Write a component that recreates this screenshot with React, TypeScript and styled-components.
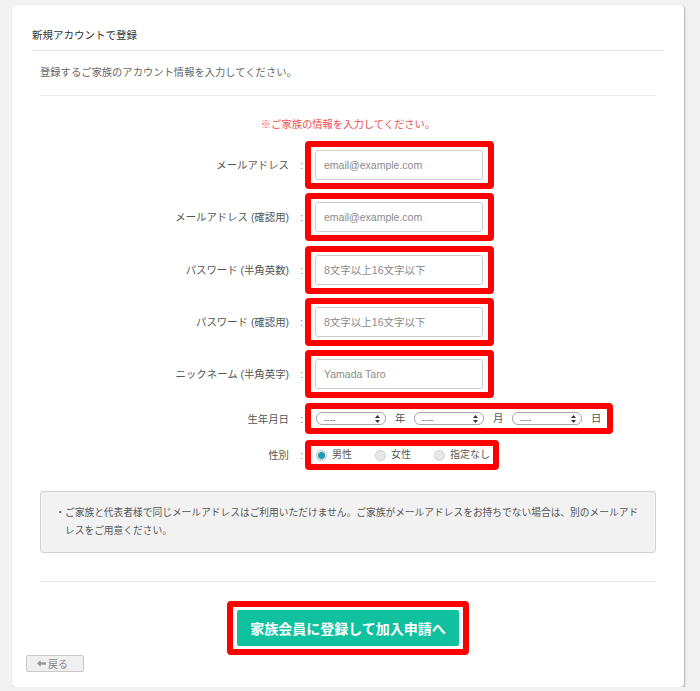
import React from "react";
import styled, { createGlobalStyle } from "styled-components";

const fields = [
  { label: "メールアドレス", placeholder: "email@example.com" },
  { label: "メールアドレス (確認用)", placeholder: "email@example.com" },
  { label: "パスワード (半角英数)", placeholder: "8文字以上16文字以下" },
  { label: "パスワード (確認用)", placeholder: "8文字以上16文字以下" },
  { label: "ニックネーム (半角英字)", placeholder: "Yamada Taro" },
];

const genders = [
  { label: "男性", checked: true },
  { label: "女性", checked: false },
  { label: "指定なし", checked: false },
];

const birthParts = ["年", "月", "日"];

const SelectArrows = () => (
  <svg width="5" height="8" viewBox="0 0 5 8">
    <path d="M2.5 0 L5 3 H0 Z" fill="#333" />
    <path d="M2.5 8 L5 5 H0 Z" fill="#333" />
  </svg>
);

const BackArrow = () => (
  <svg width="9" height="7" viewBox="0 0 9 7">
    <path d="M0 3.5 L3.6 0 V2.3 H9 V4.7 H3.6 V7 Z" fill="#999" />
  </svg>
);

const App = () => {
  return (
    <>
      <GlobalStyle />
      <Card>
        <Header>新規アカウントで登録</Header>
        <Body>
          <Subtitle>登録するご家族のアカウント情報を入力してください。</Subtitle>
          <Notice>※ご家族の情報を入力してください。</Notice>
          <Form>
            {fields.map((field, i) => (
              <Row key={field.label} $gap={i === 0 ? 0 : 4.25} $h={48}>
                <Label>{field.label}</Label>
                <Colon>:</Colon>
                <Highlight $pad="3px 5px 3px 4px">
                  <TextInput placeholder={field.placeholder} />
                </Highlight>
              </Row>
            ))}
            <Row $gap={5} $h={31}>
              <Label>生年月日</Label>
              <Colon>:</Colon>
              <Highlight $pad="3px 6px 3px 5px">
                <DateGroup>
                  {birthParts.map((unit) => (
                    <React.Fragment key={unit}>
                      <SelectBox>
                        <span>----</span>
                        <SelectArrows />
                      </SelectBox>
                      <Unit>{unit}</Unit>
                    </React.Fragment>
                  ))}
                </DateGroup>
              </Highlight>
            </Row>
            <Row $gap={6} $h={30}>
              <Label>性別</Label>
              <Colon>:</Colon>
              <Highlight $pad="3px 3px 3px 5px">
                <RadioGroup>
                  {genders.map((g) => (
                    <RadioItem key={g.label}>
                      <Radio $checked={g.checked} />
                      {g.label}
                    </RadioItem>
                  ))}
                </RadioGroup>
              </Highlight>
            </Row>
          </Form>
          <NoteBox>
            ・ご家族と代表者様で同じメールアドレスはご利用いただけません。ご家族がメールアドレスをお持ちでない場合は、別のメールアドレスをご用意ください。
          </NoteBox>
        </Body>
        <Divider />
        <Footer>
          <Highlight $pad="3px 4px">
            <SubmitButton>家族会員に登録して加入申請へ</SubmitButton>
          </Highlight>
          <BackButton>
            <BackArrow />
            戻る
          </BackButton>
        </Footer>
      </Card>
    </>
  );
};

export default App;

const GlobalStyle = createGlobalStyle`
  html, body {
    margin: 0;
    padding: 0;
    background: #f2f2f2;
  }
  body {
    font-family: "Liberation Sans", "Noto Sans CJK JP", sans-serif;
    color: #555;
  }
`;

const Card = styled.div`
  box-sizing: border-box;
  width: 672px;
  margin: 5px 0 0 12px;
  padding: 0 20px;
  background: #fff;
  border-radius: 4px;
  box-shadow: 1px 1px 2px rgba(0, 0, 0, 0.28), 0 0 1px rgba(0, 0, 0, 0.15);
`;

const Header = styled.div`
  padding: 22px 0 7px;
  font-size: 10.5px;
  line-height: 16px;
  color: #333;
  border-bottom: 1px solid #e3e3e3;
`;

const Body = styled.div`
  padding: 0 8px;
`;

const Subtitle = styled.div`
  padding: 14px 0;
  font-size: 10.3px;
  line-height: 16px;
  color: #666;
  border-bottom: 1px solid #ececec;
`;

const Notice = styled.div`
  margin: 21px 0 8px;
  text-align: center;
  font-size: 10.3px;
  line-height: 16px;
  color: #ef5050;
`;

const Form = styled.div`
  display: flex;
  flex-direction: column;
`;

const Row = styled.div<{ $gap: number; $h: number }>`
  display: grid;
  grid-template-columns: 249px 16px auto;
  align-items: center;
  height: ${({ $h }) => $h}px;
  margin-top: ${({ $gap }) => $gap}px;
  line-height: 14px;
`;

const Label = styled.div`
  padding-top: 2px;
  text-align: right;
  font-size: 10.4px;
  color: #555;
`;

const Colon = styled.span`
  padding-top: 2px;
  text-align: right;
  padding-right: 2px;
  font-size: 10px;
  color: #777;
`;

const Highlight = styled.div<{ $pad: string }>`
  justify-self: start;
  display: inline-flex;
  align-items: center;
  padding: ${({ $pad }) => $pad};
  border: 6px solid #ff0000;
  border-radius: 4px;
  line-height: 12px;
`;

const TextInput = styled.input`
  box-sizing: border-box;
  display: block;
  width: 168px;
  height: 30px;
  margin: 0;
  padding: 0 8px;
  border: 1px solid #cdcdcd;
  border-radius: 3px;
  font-family: inherit;
  font-size: 10.5px;
  color: #333;
  outline: none;
  &::placeholder {
    color: #8a8a8a;
  }
`;

const DateGroup = styled.div`
  display: flex;
  align-items: center;
  gap: 9px;
  height: 13px;
`;

const SelectBox = styled.div`
  box-sizing: border-box;
  width: 70px;
  height: 13px;
  display: flex;
  align-items: center;
  justify-content: space-between;
  padding: 0 5px 0 7px;
  border: 1px solid #a8a8a8;
  border-radius: 6px;
  background: #fff;
  font-size: 8.5px;
  line-height: 10px;
  color: #666;
  span {
    padding-top: 3px;
  }
`;

const Unit = styled.span`
  width: 10px;
  font-size: 10.4px;
  color: #555;
`;

const RadioGroup = styled.div`
  display: flex;
  align-items: center;
  gap: 23px;
  height: 12px;
`;

const RadioItem = styled.label`
  display: flex;
  align-items: center;
  gap: 5px;
  font-size: 10px;
  color: #555;
`;

const Radio = styled.span<{ $checked: boolean }>`
  box-sizing: border-box;
  width: 11px;
  height: 11px;
  border-radius: 50%;
  border: 1px solid ${({ $checked }) => ($checked ? "#b8b8b8" : "#cfcfcf")};
  background: ${({ $checked }) =>
    $checked
      ? "radial-gradient(circle, #1a9db3 0 3.3px, #f5f5f5 3.8px)"
      : "#e8e8e8"};
`;

const NoteBox = styled.div`
  margin-top: 21px;
  padding: 12px 12px 12px 24px;
  text-indent: -1em;
  background: #f2f2f2;
  border: 1px solid #d2d2d2;
  border-radius: 3px;
  font-size: 9.73px;
  line-height: 18px;
  color: #555;
`;

const Divider = styled.div`
  margin: 28px 8px 0;
  border-top: 1px solid #e8e8e8;
`;

const Footer = styled.div`
  display: flex;
  flex-direction: column;
  align-items: center;
  padding: 19px 0 15px;
`;

const SubmitButton = styled.button`
  display: block;
  width: 222px;
  height: 36px;
  margin: 0;
  border: none;
  border-radius: 2px;
  background: #0fc19e;
  color: #fff;
  font-family: "Noto Sans CJK JP", sans-serif;
  font-size: 14px;
  font-weight: 700;
  cursor: pointer;
`;

const BackButton = styled.button`
  align-self: flex-start;
  margin: 0 0 0 -6px;
  box-sizing: border-box;
  width: 58px;
  height: 17px;
  display: inline-flex;
  align-items: center;
  gap: 2px;
  padding: 0 0 0 10px;
  border: 1px solid #c8c8c8;
  border-radius: 2px;
  background: #f0f0f0;
  font-family: "Noto Sans CJK JP", sans-serif;
  font-size: 10px;
  color: #888;
  cursor: pointer;
`;
